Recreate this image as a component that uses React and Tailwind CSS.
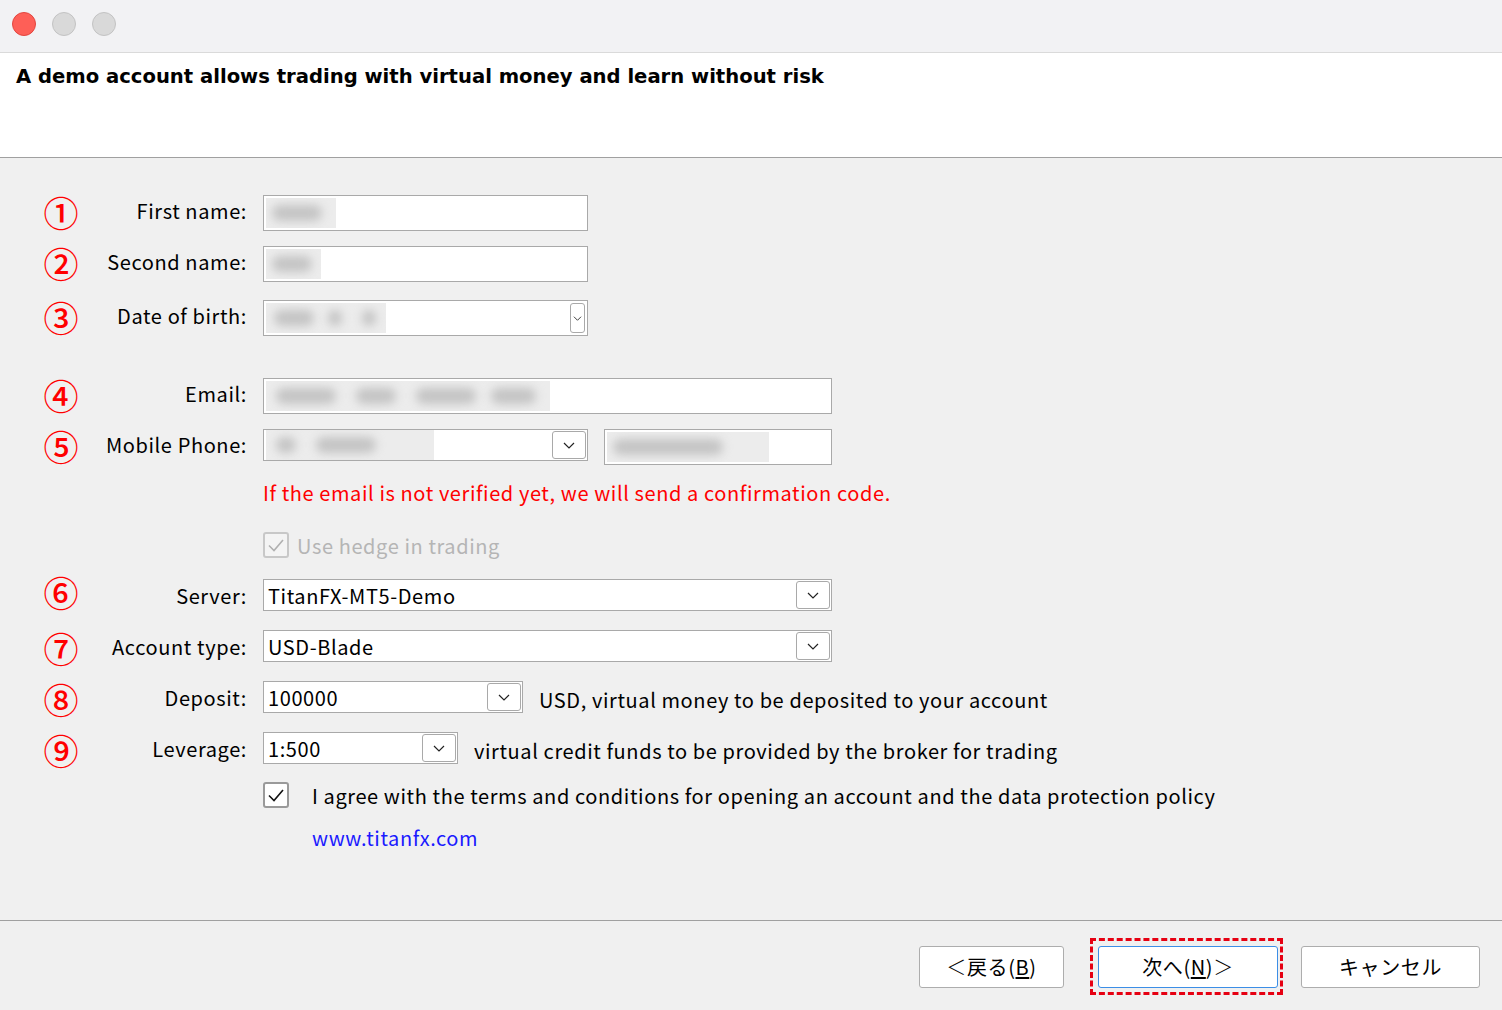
import React from "react";

const JP = { fontFamily: '"Noto Sans CJK JP", "Noto Sans", sans-serif' };

function Chevron({ w = 12, h = 7 }) {
  return (
    <svg width={w} height={h} viewBox="0 0 12 7" fill="none">
      <path d="M1 1 L6 6 L11 1" stroke="#222" strokeWidth="1.2" />
    </svg>
  );
}

function Blur({ w, blobs }) {
  return (
    <div className="relative h-full bg-[#ececec] overflow-hidden" style={{ width: w }}>
      {blobs.map((b, i) => (
        <div
          key={i}
          className="absolute top-1/2 -translate-y-1/2 rounded-full bg-[#c4c4c4] blur-[5px]"
          style={{ left: b[0], width: b[1], height: 16 }}
        />
      ))}
    </div>
  );
}

function Num({ n, cls }) {
  return (
    <div
      className={
        "w-[34px] flex items-center justify-center text-[#ff0000] text-[35px] font-medium leading-none " + cls
      }
      style={JP}
    >
      {n}
    </div>
  );
}

function Label({ children, tight }) {
  return (
    <div
      className={
        "w-[169px] text-right text-[20px] tracking-[0.6px] text-black leading-none " +
        (tight ? "pt-[2px]" : "pb-[4px]")
      }
      style={JP}
    >
      {children}
    </div>
  );
}

function Row({ n, label, children, tight, numCls, className = "" }) {
  return (
    <div className={"flex items-center " + className}>
      <Num n={n} cls={numCls || (tight ? "pt-[2px]" : "pb-[4px]")} />
      <Label tight={tight}>{label}</Label>
      <div className="ml-4 flex items-center">{children}</div>
    </div>
  );
}

function Select({ w, value, btnW = 34 }) {
  return (
    <div
      className="h-[32px] bg-white border border-[#a9a9a9] flex items-center justify-between pl-[4px] pr-[1px]"
      style={{ width: w }}
    >
      <span className="text-[20px] tracking-[0.6px] text-black leading-none pt-[1px]" style={JP}>{value}</span>
      <div
        className="h-[28px] border border-[#a9a9a9] rounded-[3px] bg-white flex items-center justify-center"
        style={{ width: btnW }}
      >
        <Chevron />
      </div>
    </div>
  );
}

export default function App() {
  return (
    <div className="w-[1502px] h-[1010px] bg-[#f0f0f0] flex flex-col overflow-hidden" style={JP}>
      {/* title bar */}
      <div className="h-[53px] bg-[#f2f2f4] border-b border-[#dadada] flex items-center pl-[12px] pb-[4px] gap-4">
        <div className="w-[24px] h-[24px] rounded-full bg-[#fe5f57] border border-[#e2463f]" />
        <div className="w-[24px] h-[24px] rounded-full bg-[#d9d9d9] border border-[#c3c3c3]" />
        <div className="w-[24px] h-[24px] rounded-full bg-[#d9d9d9] border border-[#c3c3c3]" />
      </div>
      {/* header */}
      <div className="h-[105px] bg-white border-b border-[#a0a0a0] pl-[16px] pt-[11px]">
        <div
          className="text-[19.6px] font-bold text-black leading-[26px]"
          style={{ fontFamily: '"DejaVu Sans", Verdana, sans-serif' }}
        >
          A demo account allows trading with virtual money and learn without risk
        </div>
      </div>
      {/* form */}
      <div className="h-[762px] pl-[44px] flex flex-col">
        <Row n="①" label="First name:" className="mt-[37px] h-[36px]">
          <div className="w-[325px] h-[36px] bg-white border border-[#a9a9a9] p-[2px]">
            <Blur w={70} blobs={[[6, 50]]} />
          </div>
        </Row>
        <Row n="②" label="Second name:" className="mt-[15px] h-[36px]">
          <div className="w-[325px] h-[36px] bg-white border border-[#a9a9a9] p-[2px]">
            <Blur w={55} blobs={[[6, 40]]} />
          </div>
        </Row>
        <Row n="③" label="Date of birth:" className="mt-[18px] h-[36px]">
          <div className="w-[325px] h-[36px] bg-white border border-[#a9a9a9] p-[2px] flex justify-between">
            <Blur w={120} blobs={[[8, 40], [62, 14], [96, 14]]} />
            <div className="w-[15px] h-[30px] border border-[#a9a9a9] rounded-[3px] flex items-center justify-center">
              <Chevron w={9} h={5} />
            </div>
          </div>
        </Row>
        <Row n="④" label="Email:" className="mt-[42px] h-[36px]">
          <div className="w-[569px] h-[36px] bg-white border border-[#a9a9a9] p-[2px]">
            <Blur w={284} blobs={[[10, 60], [90, 40], [150, 60], [225, 45]]} />
          </div>
        </Row>
        <div className="mt-[15px] h-[36px] flex items-start">
          <div className="flex items-center h-[36px]">
            <Num n="⑤" cls="pb-[4px]" />
            <Label>Mobile Phone:</Label>
          </div>
          <div className="ml-4 flex items-start gap-[16px]">
            <div className="w-[325px] h-[32px] bg-white border border-[#a9a9a9] pl-[2px] pr-[1px] flex items-center justify-between">
              <Blur w={168} blobs={[[10, 20], [50, 60]]} />
              <div className="w-[34px] h-[28px] border border-[#a9a9a9] rounded-[3px] flex items-center justify-center">
                <Chevron />
              </div>
            </div>
            <div className="w-[228px] h-[36px] bg-white border border-[#a9a9a9] p-[2px]">
              <Blur w={162} blobs={[[6, 110]]} />
            </div>
          </div>
        </div>
        <div className="mt-[16px] ml-[219px] h-[24px] flex items-center text-[20px] tracking-[0.6px] text-[#ff0000] leading-none">
          If the email is not verified yet, we will send a confirmation code.
        </div>
        <div className="mt-[27px] ml-[219px] h-[26px] flex items-center gap-[8px]">
          <div className="w-[26px] h-[26px] border-2 border-[#c8c8c8] rounded-[3px] bg-[#f4f4f4] flex items-center justify-center">
            <svg width="18" height="15" viewBox="0 0 18 15" fill="none">
              <path d="M2 7.5 L7 12.5 L16 2" stroke="#b0b0b0" strokeWidth="1.6" />
            </svg>
          </div>
          <span className="text-[20px] tracking-[0.6px] text-[#b5b5b5] leading-none pt-[2px]">Use hedge in trading</span>
        </div>
        <Row n="⑥" label="Server:" tight numCls="pb-[8px]" className="mt-[21px] h-[32px]">
          <Select w={569} value="TitanFX-MT5-Demo" />
        </Row>
        <Row n="⑦" label="Account type:" tight className="mt-[19px] h-[32px]">
          <Select w={569} value="USD-Blade" />
        </Row>
        <Row n="⑧" label="Deposit:" tight className="mt-[19px] h-[32px]">
          <Select w={260} value="100000" />
          <span className="ml-[16px] text-[20px] tracking-[0.6px] text-black leading-none mt-[6px]">
            USD, virtual money to be deposited to your account
          </span>
        </Row>
        <Row n="⑨" label="Leverage:" tight className="mt-[19px] h-[32px]">
          <Select w={195} value="1:500" />
          <span className="ml-[16px] text-[20px] tracking-[0.6px] text-black leading-none mt-[6px]">
            virtual credit funds to be provided by the broker for trading
          </span>
        </Row>
        <div className="mt-[18px] ml-[219px] h-[26px] flex items-center gap-[23px]">
          <div className="w-[26px] h-[26px] border-2 border-[#9a9a9a] rounded-[3px] bg-white flex items-center justify-center">
            <svg width="18" height="15" viewBox="0 0 18 15" fill="none">
              <path d="M2 7.5 L7 12.5 L16 2" stroke="#111" strokeWidth="1.6" />
            </svg>
          </div>
          <span className="text-[20px] tracking-[0.6px] text-black leading-none pt-[2px]">
            I agree with the terms and conditions for opening an account and the data protection policy
          </span>
        </div>
        <div className="mt-[18px] ml-[268px] h-[24px] flex items-center text-[20px] tracking-[0.6px] text-[#1a1aff] leading-none">
          www.titanfx.com
        </div>
      </div>
      {/* footer */}
      <div className="flex-1 border-t border-[#a0a0a0] flex items-start pt-[17px] pl-[919px]">
        <div className="mt-[8px] w-[145px] h-[42px] bg-white border border-[#adadad] rounded-[3px] flex items-center justify-center text-[20px] tracking-[0.6px] text-black">
          <span><span className="font-light">＜</span>戻る(<span className="underline underline-offset-2">B</span>)</span>
        </div>
        <div className="ml-[26px] w-[193px] h-[57px] border-[3px] border-dashed border-[#e60012] p-[5px]">
          <div className="w-[180px] h-[42px] bg-white border border-[#3c8ee6] rounded-[3px] flex items-center justify-center text-[20px] tracking-[0.6px] text-black">
            <span>次へ(<span className="underline underline-offset-2">N</span>)<span className="font-light">＞</span></span>
          </div>
        </div>
        <div className="mt-[8px] ml-[18px] w-[179px] h-[42px] bg-white border border-[#adadad] rounded-[3px] flex items-center justify-center text-[20px] tracking-[0.6px] text-black">
          キャンセル
        </div>
      </div>
    </div>
  );
}
